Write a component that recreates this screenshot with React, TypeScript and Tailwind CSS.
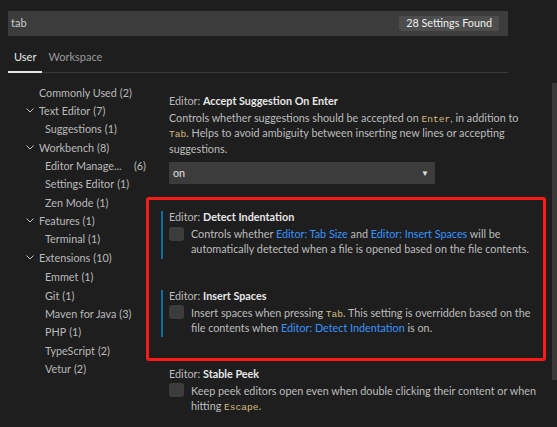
import { ReactNode } from "react";

const font = { fontFamily: 'Lato, "Noto Sans", sans-serif' };
const mono = { fontFamily: '"Liberation Mono", "DejaVu Sans Mono", monospace' };

function Chevron() {
  return (
    <svg width="8" height="5" viewBox="0 0 8 5" className="shrink-0">
      <polyline points="0.5,0.5 4,4 7.5,0.5" fill="none" stroke="#c5c5c5" strokeWidth="1" />
    </svg>
  );
}

function TocItem({ label, count, level, open }: { label: string; count: string; level: 1 | 2; open?: boolean }) {
  return (
    <div className={`flex h-[18.33px] items-center whitespace-nowrap ${level === 1 ? "pl-[26px]" : "pl-[45px]"}`}>
      {level === 1 && <div className="w-[13px]">{open && <Chevron />}</div>}
      <span>{label}</span>
      <span className="ml-[3px]">{count}</span>
    </div>
  );
}

function Code({ children }: { children: ReactNode }) {
  return (
    <span className="text-[9.6px] leading-none text-[#d7ba7d]" style={mono}>
      {children}
    </span>
  );
}

function Link({ children }: { children: ReactNode }) {
  return <span className="text-[#3794ff]">{children}</span>;
}

function Title({ name }: { name: string }) {
  return (
    <div className="h-[11px] leading-[11px] whitespace-nowrap text-[#bbbbbb]">
      Editor: <span className="font-bold text-[#e7e7e7]">{name}</span>
    </div>
  );
}

function Checkbox() {
  return <div className="mt-[0.5px] h-[14px] w-[15px] shrink-0 rounded-[3px] bg-[#3c3c3c]" />;
}

function BoolSetting({ name, children, marked }: { name: string; children: ReactNode; marked?: boolean }) {
  return (
    <div className={`border-l-2 ${marked ? "border-[#0e70a0]" : "border-transparent"} pl-[6px] pb-[2.5px]`}>
      <Title name={name} />
      <div className="mt-[4px] flex items-start gap-[7px]">
        <Checkbox />
        <div className="leading-[15px] text-[#bdbdbd]">{children}</div>
      </div>
    </div>
  );
}

export default function App() {
  return (
    <div className="relative h-[427px] w-[557px] overflow-hidden bg-[#1e1e1e] text-[12px]" style={font}>
      <div className="px-[8px] pt-[11px]">
        <div className="flex h-[25px] w-[500px] items-center justify-between bg-[#3c3c3c] pl-[3px] pr-[9px]">
          <span className="text-[11px] text-[#cccccc]">tab</span>
          <span className="flex h-[15px] items-center rounded-[2px] bg-[#4d4d4d] px-[7px] text-[10.8px] text-[#f0f0f0]">
            28 Settings Found
          </span>
        </div>
        <div className="mt-[13px] flex w-[500px] border-b border-[#3a3a3a] text-[11px]">
          <div className="-mb-px border-b-2 border-[#e7e7e7] px-[6px] pb-[5px] text-[#e7e7e7]">User</div>
          <div className="px-[6px] pb-[5px] text-[#9a9a9a]">Workspace</div>
        </div>
      </div>

      <div className="mt-[11px] flex">
        <div className="w-[146px] shrink-0 text-[10.8px] text-[#bbbbbb]">
          <TocItem level={1} label="Commonly Used" count="(2)" />
          <TocItem level={1} open label="Text Editor" count="(7)" />
          <TocItem level={2} label="Suggestions" count="(1)" />
          <TocItem level={1} open label="Workbench" count="(8)" />
          <div className="flex h-[18.33px] items-center whitespace-nowrap pl-[45px]">
            <span className="w-[90px]">Editor Manage...</span>
            <span>(6)</span>
          </div>
          <TocItem level={2} label="Settings Editor" count="(1)" />
          <TocItem level={2} label="Zen Mode" count="(1)" />
          <TocItem level={1} open label="Features" count="(1)" />
          <TocItem level={2} label="Terminal" count="(1)" />
          <TocItem level={1} open label="Extensions" count="(10)" />
          <div className="h-[1.5px]" />
          <TocItem level={2} label="Emmet" count="(1)" />
          <TocItem level={2} label="Git" count="(1)" />
          <TocItem level={2} label="Maven for Java" count="(3)" />
          <TocItem level={2} label="PHP" count="(1)" />
          <TocItem level={2} label="TypeScript" count="(2)" />
          <TocItem level={2} label="Vetur" count="(2)" />
        </div>

        <div className="w-[400px] pt-[11.5px] text-[10.8px]">
          <div className="pl-[23px]">
            <Title name="Accept Suggestion On Enter" />
            <div className="mt-[3.75px] w-[362px] leading-[15.5px] text-[#bdbdbd]">
              Controls whether suggestions should be accepted on <Code>Enter</Code>, in addition to <Code>Tab</Code>. Helps to
              avoid ambiguity between inserting new lines or accepting suggestions.
            </div>
            <div className="mt-[6px] flex h-[22px] w-[266px] items-center justify-between bg-[#3c3c3c] pl-[4px] pr-[6px] text-[10.8px] text-[#e0e0e0]">
              <span>on</span>
              <span className="text-[8px] text-[#e0e0e0]">▼</span>
            </div>
          </div>

          <div className="mt-[13px] h-[164px] rounded-[3px] border-[3px] border-[#ff1a1a] pl-[12px] pt-[11px]">
            <BoolSetting marked name="Detect Indentation">
              Controls whether <Link>Editor: Tab Size</Link> and <Link>Editor: Insert Spaces</Link> will be automatically
              detected when a file is opened based on the file contents.
            </BoolSetting>
            <div className="h-[31px]" />
            <BoolSetting marked name="Insert Spaces">
              Insert spaces when pressing <Code>Tab</Code>. This setting is overridden based on the file contents when{" "}
              <Link>Editor: Detect Indentation</Link> is on.
            </BoolSetting>
          </div>

          <div className="mt-[6.5px] pl-[15px]">
            <BoolSetting name="Stable Peek">
              Keep peek editors open even when double clicking their content or when hitting <Code>Escape</Code>.
            </BoolSetting>
          </div>
        </div>
      </div>

      <div className="absolute left-[552px] top-[83px] h-[297px] w-[5px] bg-[#3a3a3a]" />
    </div>
  );
}
